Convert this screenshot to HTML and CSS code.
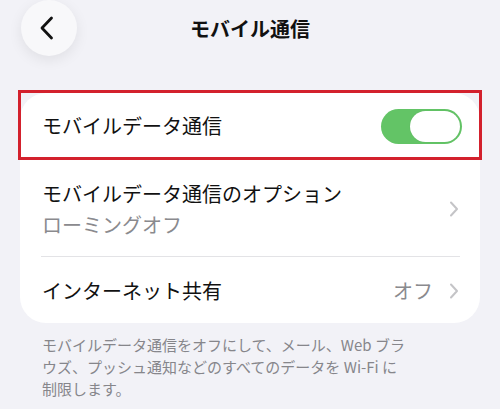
FILE: index.html
```html
<!DOCTYPE html>
<html lang="ja">
<head>
<meta charset="utf-8">
<link rel="stylesheet" href="styles.css">
</head>
<body>
<div class="screen">
  <header class="nav">
    <div class="back">
      <svg width="16" height="24" viewBox="0 0 16 24"><path d="M12.5 2 L3 12 L12.5 22" fill="none" stroke="#111" stroke-width="2.8" stroke-linecap="round" stroke-linejoin="round"/></svg>
    </div>
    <h1 class="title">モバイル通信</h1>
  </header>

  <section class="card">
    <div class="row row-toggle">
      <span class="label">モバイルデータ通信</span>
      <span class="toggle"><span class="knob"></span></span>
      <div class="highlight"></div>
    </div>
    <div class="row row-double">
      <div class="texts">
        <div class="label">モバイルデータ通信のオプション</div>
        <div class="sub">ローミングオフ</div>
      </div>
      <svg class="chev" width="10" height="16" viewBox="0 0 10 16"><path d="M2 1.5 L8 8 L2 14.5" fill="none" stroke="#c4c4c7" stroke-width="2" stroke-linecap="round" stroke-linejoin="round"/></svg>
    </div>
    <div class="sep"></div>
    <div class="row row-single">
      <span class="label">インターネット共有</span>
      <span class="value">オフ</span>
      <svg class="chev" width="10" height="16" viewBox="0 0 10 16"><path d="M2 1.5 L8 8 L2 14.5" fill="none" stroke="#c4c4c7" stroke-width="2" stroke-linecap="round" stroke-linejoin="round"/></svg>
    </div>
  </section>

  <p class="footer">モバイルデータ通信をオフにして、メール、Web ブラ<br>ウズ、プッシュ通知などのすべてのデータを Wi-Fi に<br>制限します。</p>
</div>
</body>
</html>
```

FILE: styles.css
```css
* { box-sizing: border-box; }
html, body {
  margin: 0;
  padding: 0;
  background: #f2f2f7;
}
body {
  font-family: "Noto Sans CJK JP", "Noto Sans", sans-serif;
  color: #111;
  width: 500px;
  height: 409px;
  overflow: hidden;
}
.screen {
  display: flex;
  flex-direction: column;
}
.nav {
  position: relative;
  height: 56px;
  display: flex;
  align-items: center;
  justify-content: center;
}
.back {
  position: absolute;
  left: 21px;
  top: 0;
  width: 56px;
  height: 56px;
  border-radius: 50%;
  background: #f8f8fa;
  box-shadow: 0 4px 14px rgba(0,0,0,0.08);
  display: flex;
  align-items: center;
  justify-content: center;
  padding-right: 4px;
}
.title {
  margin: 0;
  font-size: 20px;
  font-weight: 700;
  line-height: 1;
  padding-top: 2px;
  color: #111;
}
.card {
  margin: 37px 20px 0 20px;
  background: #fff;
  border-radius: 26px;
  display: flex;
  flex-direction: column;
}
.row {
  display: flex;
  align-items: center;
  padding-left: 22px;
}
.label {
  font-size: 20px;
  line-height: 30px;
  color: #111;
}
.row-toggle {
  position: relative;
  height: 66px;
  padding-right: 18px;
  justify-content: space-between;
}
.highlight {
  position: absolute;
  left: -2px;
  right: -2px;
  top: -3px;
  bottom: -1px;
  border: 3px solid #d3212d;
}
.toggle {
  width: 81px;
  height: 35px;
  border-radius: 18px;
  background: #63c466;
  display: flex;
  align-items: center;
  justify-content: flex-end;
  padding-right: 2px;
}
.knob {
  width: 50px;
  height: 31px;
  border-radius: 16px;
  background: #fff;
  box-shadow: 0 0 1px rgba(0,0,0,0.15);
}
.row-double {
  height: 97px;
  padding-right: 21px;
  justify-content: space-between;
  padding-top: 2px;
}
.texts .label { line-height: 31px; }
.sub {
  font-size: 20px;
  line-height: 31px;
  color: #8a8a8e;
}
.chev { display: block; }
.sep {
  height: 1px;
  background: #e3e3e6;
  margin: 0 20px 0 21px;
}
.row-single {
  height: 66px;
  padding-right: 21px;
  padding-top: 2px;
}
.row-single .label { flex: 1; }
.value {
  font-size: 20px;
  line-height: 30px;
  color: #8a8a8e;
  margin-right: 16px;
}
.footer {
  margin: 11px 0 0 42px;
  font-size: 15px;
  line-height: 22px;
  color: #86868b;
}
```
